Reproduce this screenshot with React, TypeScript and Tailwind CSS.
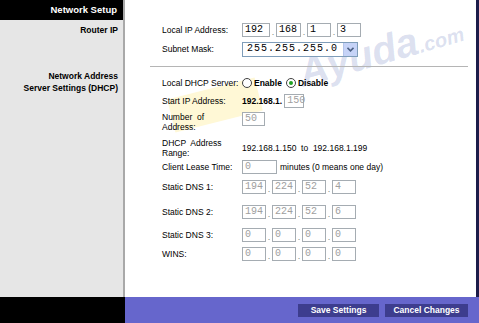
import React from 'react';

const font = { fontFamily: '"Liberation Sans", Arial, sans-serif' };

function Box({ v, w = 'w-[24px]', dim = true }: { v: string; w?: string; dim?: boolean }) {
  return (
    <div
      className={`${w} h-[14px] border border-[#a5acb2] bg-white flex items-center pl-[2px] font-['Liberation_Mono',monospace] text-[10px] leading-none ${dim ? 'text-[#a0a0a0]' : 'text-black'}`}
    >
      {v}
    </div>
  );
}

function Quad({ vals, dim = true, sizes }: { vals: string[]; dim?: boolean; sizes?: string[] }) {
  return (
    <div className="flex items-end">
      {vals.map((v, i) => (
        <React.Fragment key={i}>
          {i > 0 && <span className="w-[6px] text-center text-[9px] leading-none text-[#808080]">.</span>}
          <Box v={v} dim={dim} w={sizes ? sizes[i] : 'w-[24px]'} />
        </React.Fragment>
      ))}
    </div>
  );
}

function Radio({ checked }: { checked?: boolean }) {
  return (
    <span className="w-[10px] h-[10px] rounded-full border border-[#404040] bg-white flex items-center justify-center mr-[2px]">
      {checked && <span className="w-[4px] h-[4px] rounded-full bg-[#21a121]" />}
    </span>
  );
}

function Row({ label, children, cls }: { label: React.ReactNode; children?: React.ReactNode; cls: string }) {
  return (
    <div className={`flex ${cls}`}>
      <div className="w-[80px] text-[8.5px] leading-[10px] text-black flex items-center">{label}</div>
      <div className="flex items-center text-[8.5px]">{children}</div>
    </div>
  );
}

export default function App() {
  return (
    <div className="w-[479px] h-[323px] flex flex-col overflow-hidden relative bg-white" style={font}>
      {/* Watermark, drawn under the form */}
      <div className="absolute left-[170px] top-[88px] w-[90px] h-[34px] -rotate-[14deg] bg-[#ffe45c]/25 pointer-events-none" />
      <div className="absolute left-[296px] top-[30px] -rotate-[16deg] text-[40px] font-black italic text-[#4a5fb0]/20 pointer-events-none select-none leading-none">
        Ayuda<span className="text-[20px]">.com</span>
      </div>

      <div className="flex flex-1 relative">
        {/* Sidebar */}
        <div className="w-[125px] bg-[#e6e6e6] border-r-2 border-[#a9a9a9] flex flex-col">
          <div className="h-[20px] bg-black text-white font-bold text-[9.5px] flex items-center justify-end pr-[6px]">
            Network Setup
          </div>
          <div className="text-right pr-[5px] font-bold text-[8.5px] leading-[11px] pt-[5px]">Router IP</div>
          <div className="text-right pr-[5px] font-bold text-[8.5px] leading-[12px] mt-[34px]">
            Network Address
            <br />
            Server Settings (DHCP)
          </div>
        </div>

        {/* Content */}
        <div className="flex-1 border-r-[3px] border-[#1c1c4a] flex flex-col pl-[37px] pt-[22px]">
          <Row label="Local IP Address:" cls="h-[16px]">
            <Quad vals={['192', '168', '1', '3']} dim={false} sizes={['w-[28px]', 'w-[25px]', 'w-[24px]', 'w-[24px]']} />
          </Row>
          <Row label="Subnet Mask:" cls="h-[16px] mt-[3px]">
            <div className="w-[116px] h-[15px] border border-[#7f9db9] bg-white flex items-center">
              <span className="flex-1 pl-[4px] font-['Liberation_Mono',monospace] text-[10px] tracking-[1px] leading-none">
                255.255.255.0
              </span>
              <span className="w-[14px] h-[13px] bg-[#c6d3f7] border-l border-[#b4c4ea] flex items-center justify-center">
                <svg width="7" height="5" viewBox="0 0 7 5">
                  <polyline points="0.5,0.8 3.5,3.8 6.5,0.8" fill="none" stroke="#4d6185" strokeWidth="1.6" />
                </svg>
              </span>
            </div>
          </Row>
          <div className="mt-[9px] -ml-[12px] mr-[8px] border-t border-[#b5b5b5]" />
          <Row label="Local DHCP Server:" cls="h-[14px] mt-[9px]">
            <Radio />
            <span className="font-bold mr-[4px]">Enable</span>
            <Radio checked />
            <span className="font-bold">Disable</span>
          </Row>
          <Row label="Start IP Address:" cls="h-[14px] mt-[4px]">
            <span className="font-bold mr-[2px]">192.168.1.</span>
            <Box v="150" w="w-[20px]" />
          </Row>
          <div className="flex h-[22px] mt-[4px]">
            <div className="w-[80px] text-[8.5px] leading-[10px]">
              Number&nbsp; of
              <br />
              Address:
            </div>
            <Box v="50" w="w-[23px]" />
          </div>
          <Row
            label={
              <span>
                DHCP&nbsp; Address
                <br />
                Range:
              </span>
            }
            cls="h-[20px] mt-[4px]"
          >
            <span className="text-[8.5px]">192.168.1.150&nbsp; to&nbsp; 192.168.1.199</span>
          </Row>
          <Row label="Client Lease Time:" cls="h-[14px] mt-[2px]">
            <Box v="0" w="w-[35px]" />
            <span className="ml-[3px]">minutes (0 means one day)</span>
          </Row>
          <Row label="Static DNS 1:" cls="h-[14px] mt-[6px]">
            <Quad vals={['194', '224', '52', '4']} />
          </Row>
          <Row label="Static DNS 2:" cls="h-[13px] mt-[11px]">
            <Quad vals={['194', '224', '52', '6']} />
          </Row>
          <Row label="Static DNS 3:" cls="h-[13px] mt-[10px]">
            <Quad vals={['0', '0', '0', '0']} />
          </Row>
          <Row label="WINS:" cls="h-[13px] mt-[6px]">
            <Quad vals={['0', '0', '0', '0']} />
          </Row>
        </div>
      </div>

      {/* Bottom bar */}
      <div className="h-[26px] flex relative">
        <div className="w-[125px] bg-black" />
        <div className="flex-1 bg-[#6666cc] flex items-center justify-end pr-[11px] gap-[6px]">
          <button className="w-[81px] h-[13px] bg-[#3d3d8e] text-white font-bold text-[8.5px] leading-none">
            Save Settings
          </button>
          <button className="w-[83px] h-[13px] bg-[#3d3d8e] text-white font-bold text-[8.5px] leading-none">
            Cancel Changes
          </button>
        </div>
      </div>
    </div>
  );
}
